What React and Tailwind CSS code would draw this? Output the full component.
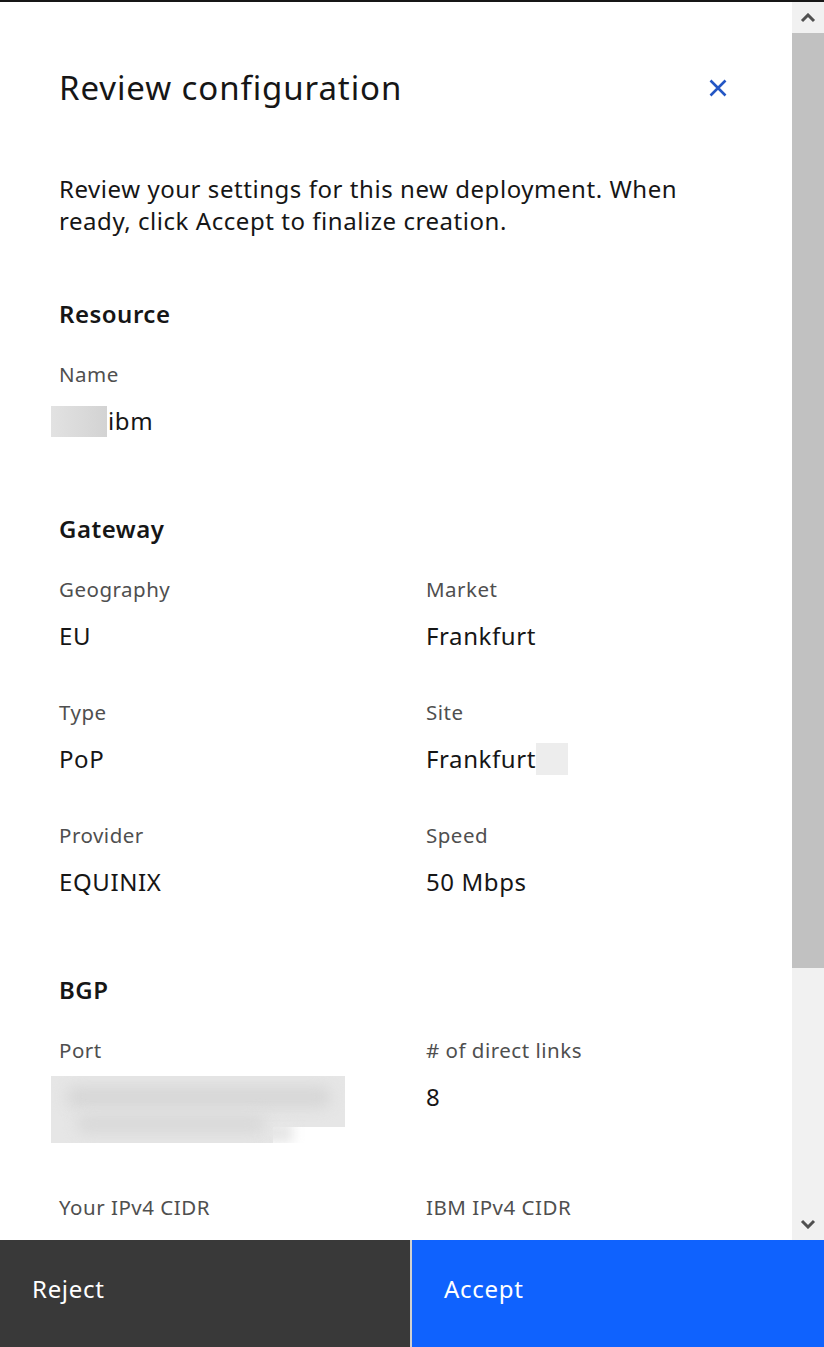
import React from "react";

const font = { fontFamily: '"Noto Sans", "Liberation Sans", sans-serif' };

const Label = ({ children }) => (
  <div className="text-[20.5px] leading-[28px] tracking-[0.5px] text-[#4f4f4f]">{children}</div>
);

const Value = ({ children }) => (
  <div className="mt-[17px] text-[24px] leading-[32px] tracking-[0.6px] text-[#161616]">{children}</div>
);

const Field = ({ label, children }) => (
  <div>
    <Label>{label}</Label>
    <Value>{children}</Value>
  </div>
);

const Heading = ({ children }) => (
  <div className="text-[24px] leading-[32px] tracking-[0.5px] font-semibold text-[#161616]">{children}</div>
);

const Chevron = ({ up }) => (
  <svg width="16" height="10" viewBox="0 0 16 10" className={up ? "" : "rotate-180"}>
    <path d="M2 8 L8 2 L14 8" fill="none" stroke="#505050" strokeWidth="3" />
  </svg>
);

export default function App() {
  return (
    <div style={font} className="w-[824px] h-[1347px] flex flex-col overflow-hidden bg-white">
      <div className="h-[2px] bg-[#161616]" />
      <div className="flex-1 flex min-h-0">
        <div className="flex-1 overflow-hidden pl-[59px] pr-[65px] pt-[66px]">
          <div className="flex items-center justify-between">
            <h1 className="text-[33px] leading-[40px] tracking-[0.9px] text-[#161616]">Review configuration</h1>
            <svg width="18" height="18" viewBox="0 0 18 18">
              <path d="M1.5 1.5 L16.5 16.5 M16.5 1.5 L1.5 16.5" stroke="#2456c4" strokeWidth="2.6" />
            </svg>
          </div>
          <p className="mt-[65px] text-[24px] leading-[32px] tracking-[0.55px] text-[#161616] pr-[20px]">
            Review your settings for this new deployment. When ready, click Accept to finalize creation.
          </p>

          <div className="mt-[61px]">
            <Heading>Resource</Heading>
            <div className="mt-[30px]">
              <Label>Name</Label>
              <div className="mt-[17px] flex items-center text-[24px] leading-[32px] tracking-[0.6px] text-[#161616]">
                <span className="-ml-[8px] w-[56px] h-[31px] bg-gradient-to-r from-[#e2e2e2] to-[#d3d3d3]" />
                <span className="ml-[1px]">ibm</span>
              </div>
            </div>
          </div>

          <div className="mt-[76px]">
            <Heading>Gateway</Heading>
            <div className="mt-[30px] grid grid-cols-[367px_1fr] gap-y-[46px]">
              <Field label="Geography">EU</Field>
              <Field label="Market">Frankfurt</Field>
              <Field label="Type">PoP</Field>
              <div>
                <Label>Site</Label>
                <div className="mt-[17px] flex items-center text-[24px] leading-[32px] tracking-[0.6px] text-[#161616]">
                  <span>Frankfurt</span>
                  <span className="w-[32px] h-[32px] bg-[#ededed]" />
                </div>
              </div>
              <Field label="Provider">EQUINIX</Field>
              <Field label="Speed">50 Mbps</Field>
            </div>
          </div>

          <div className="mt-[76px]">
            <Heading>BGP</Heading>
            <div className="mt-[30px] grid grid-cols-[367px_1fr] gap-y-[46px]">
              <div>
                <Label>Port</Label>
                <div className="mt-[12px] mb-[4px] -ml-[8px] relative w-[294px] h-[67px] overflow-hidden">
                  <div className="absolute left-0 top-0 w-[294px] h-[51px] bg-[#e6e6e6]" />
                  <div className="absolute left-0 top-[30px] w-[222px] h-[37px] bg-[#e6e6e6]" />
                  <div className="absolute left-[212px] top-[46px] w-[30px] h-[21px] bg-[#e6e6e6] blur-[6px]" />
                  <div className="absolute left-[15px] top-[10px] w-[265px] h-[22px] rounded-full bg-[#d7d7d7] blur-[7px]" />
                  <div className="absolute left-[25px] top-[38px] w-[190px] h-[20px] rounded-full bg-[#d9d9d9] blur-[7px]" />
                </div>
              </div>
              <Field label="# of direct links">8</Field>
              <div>
                <Label>Your IPv4 CIDR</Label>
              </div>
              <div>
                <Label>IBM IPv4 CIDR</Label>
              </div>
            </div>
          </div>
        </div>
        <div className="w-[32px] flex flex-col bg-[#f1f1f1]">
          <div className="h-[31px] flex items-center justify-center">
            <Chevron up />
          </div>
          <div className="h-[935px] bg-[#c1c1c1]" />
          <div className="flex-1" />
          <div className="h-[32px] flex items-center justify-center">
            <Chevron />
          </div>
        </div>
      </div>
      <div className="h-[107px] flex text-[24px] leading-[32px] tracking-[0.7px] text-white">
        <div className="w-[410px] bg-[#393939] pl-[32px] pt-[33px]">Reject</div>
        <div className="w-[2px] bg-[#d0d0d0]" />
        <div className="flex-1 bg-[#0f62fe] pl-[32px] pt-[33px]">Accept</div>
      </div>
    </div>
  );
}
